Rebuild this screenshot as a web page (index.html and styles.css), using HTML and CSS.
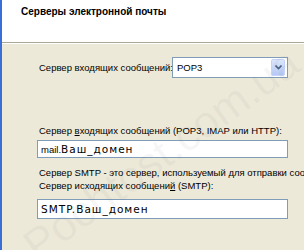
FILE: index.html
```html
<!DOCTYPE html>
<html lang="ru">
<head>
<meta charset="utf-8">
<title>Серверы электронной почты</title>
<link rel="stylesheet" href="styles.css">
</head>
<body>
<div class="window">
  <div class="edge"></div>
  <div class="main">
    <div class="header">
      <h1>Серверы электронной почты</h1>
    </div>
    <div class="content">
      <div class="row">
        <span class="label">Сервер входящих сообщений:</span>
        <div class="select">
          <span class="value">POP3</span>
          <span class="drop">
            <svg width="7" height="5" viewBox="0 0 7 5"><path d="M0.5 0.5 L3.5 3.5 L6.5 0.5" fill="none" stroke="#4d6185" stroke-width="1.6"/></svg>
          </span>
        </div>
      </div>
      <div class="field first">
        <div class="label">Сервер <u>в</u>ходящих сообщений (POP3, IMAP или HTTP):</div>
        <div class="input">mail.<span class="dom">Ваш_домен</span></div>
      </div>
      <div class="note">Сервер SMTP - это сервер, используемый для отправки сообщений</div>
      <div class="field second">
        <div class="label">Сервер исходящих сообщени<u>й</u> (SMTP):</div>
        <div class="input"><span class="dom">SMTP.Ваш_домен</span></div>
      </div>
    </div>
    <div class="mark">Pochtost.com.ua</div>
  </div>
</div>
</body>
</html>
```
FILE: styles.css
```css
body {
  margin: 0;
  background-color: #ece9d8;
  font-family: "Liberation Sans", Arial, sans-serif;
  font-size: 9.5px;
  color: #000000;
  overflow: hidden;
}
.window {
  display: flex;
  height: 250px;
}
.edge {
  width: 2px;
  background-color: #3a6fd8;
  flex-shrink: 0;
}
.main {
  flex: 1;
  min-width: 0;
  position: relative;
  overflow: hidden;
}
.header {
  height: 42px;
  background-color: #ffffff;
  border-bottom: 1px solid #aca899;
  box-shadow: 0 1px 0 #ffffff;
}
h1 {
  margin: 0;
  padding: 6px 0 0 19px;
  font-size: 10px;
  font-weight: bold;
}
.content {
  padding: 14px 16px 0 35px;
  white-space: nowrap;
}
.row {
  display: flex;
  align-items: center;
}
.row .label {
  padding-left: 2px;
  width: 133px;
}
.select {
  width: 114px;
  height: 19px;
  border: 1px solid #7f9db9;
  background-color: #ffffff;
  display: flex;
  align-items: center;
  justify-content: space-between;
}
.select .value {
  padding-left: 4px;
}
.drop {
  width: 12px;
  height: 15px;
  margin-right: 2px;
  background: linear-gradient(#dbe6fb, #b5c8f3);
  border: 1px solid #c3d3fd;
  border-radius: 2px;
  display: flex;
  align-items: center;
  justify-content: center;
}
.field.first {
  margin-top: 46px;
}
.field .label {
  padding-left: 2px;
  line-height: 13px;
}
u {
  text-decoration: underline;
}
.input {
  margin-top: 3px;
  height: 16px;
  line-height: 16px;
  border: 1px solid #7f9db9;
  background-color: #ffffff;
  padding-left: 3px;
  overflow: hidden;
}
.field.second .input {
  margin-top: 7px;
  height: 18px;
  line-height: 18px;
}
.dom {
  font-family: "DejaVu Sans", sans-serif;
  font-size: 10.5px;
  letter-spacing: 1px;
}
.note {
  margin-top: 8px;
  padding-left: 2px;
  line-height: 13px;
  width: 280px;
  overflow: hidden;
}
.mark {
  position: absolute;
  left: 12px;
  top: 230px;
  transform: rotate(-36deg);
  transform-origin: left top;
  font-size: 44px;
  color: rgba(120, 120, 120, 0.07);
  white-space: nowrap;
  pointer-events: none;
}
```
